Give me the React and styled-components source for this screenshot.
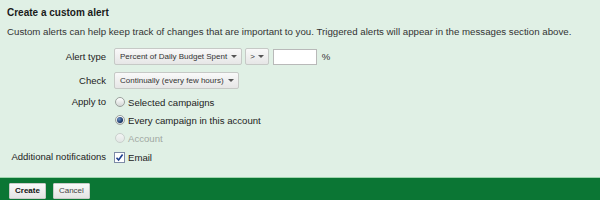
import React from "react";
import styled, { createGlobalStyle } from "styled-components";

const GlobalStyle = createGlobalStyle`
  html, body {
    margin: 0;
    padding: 0;
    background: #e0f0e5;
    font-family: "Liberation Sans", Arial, sans-serif;
  }
`;

const Page = styled.div`
  width: 600px;
  height: 200px;
  display: flex;
  flex-direction: column;
  overflow: hidden;
`;

const Panel = styled.div`
  height: 177px;
  box-sizing: border-box;
  padding: 7px 7px 0;
  color: #222;
`;

const Title = styled.h2`
  margin: 0;
  font-size: 10px;
  line-height: 12px;
  font-weight: bold;
  color: #1a1a1a;
`;

const Description = styled.p`
  margin: 7px 0 0;
  font-size: 9.7px;
  line-height: 12px;
  color: #333;
`;

const Form = styled.div`
  margin-top: 10px;
  display: flex;
  flex-direction: column;
`;

const Row = styled.div`
  display: grid;
  grid-template-columns: 99px 1fr;
  column-gap: 8px;
  align-items: start;
  margin-top: ${(p) => p.$gap || 0}px;
`;

const Label = styled.div`
  font-size: 9.5px;
  line-height: ${(p) => p.$lh || 17}px;
  text-align: right;
  color: #222;
  white-space: nowrap;
`;

const Controls = styled.div`
  display: flex;
  align-items: center;
  gap: 3px;
`;

const Options = styled.div`
  display: flex;
  flex-direction: column;
`;

const Select = styled.div`
  height: 17px;
  box-sizing: border-box;
  display: flex;
  align-items: center;
  gap: ${(p) => (p.$compact ? 3 : 4)}px;
  padding: 0 ${(p) => (p.$compact ? "4px" : "4px 0 5px")};
  border: 1px solid #c6c9c6;
  border-radius: 2px;
  background: linear-gradient(#f9f9f9, #e6e6e6);
  font-size: 8px;
  color: #333;
  white-space: nowrap;
`;

const Caret = styled.span`
  width: 0;
  height: 0;
  border-left: 3px solid transparent;
  border-right: 3px solid transparent;
  border-top: 3px solid #555;
`;

const Input = styled.div`
  width: 44px;
  height: 16px;
  box-sizing: border-box;
  border: 1px solid #b9b9b9;
  background: #fff;
  margin-left: 1px;
`;

const Unit = styled.span`
  font-size: 9.6px;
  color: #333;
  margin-left: 2px;
`;

const Option = styled.label`
  display: flex;
  align-items: center;
  gap: 3px;
  height: 18px;
  font-size: 9.6px;
  color: ${(p) => (p.$disabled ? "#a0a8a3" : "#222")};
`;

const Radio = styled.span`
  width: 10px;
  height: 10px;
  box-sizing: border-box;
  border-radius: 50%;
  border: 1px solid ${(p) => (p.$disabled ? "#c9d0cc" : "#9aa09c")};
  background: ${(p) =>
    p.$disabled
      ? "linear-gradient(#f3f5f4, #e2e6e4)"
      : "linear-gradient(#ffffff, #d4d7d5)"};
  display: flex;
  align-items: center;
  justify-content: center;
  margin-left: 1px;

  &::after {
    content: "";
    display: ${(p) => (p.$checked ? "block" : "none")};
    width: 6px;
    height: 6px;
    border-radius: 50%;
    background: radial-gradient(circle at 35% 35%, #6c8fc4, #12305f 70%);
  }
`;

const Check = styled.span`
  width: 11px;
  height: 11px;
  box-sizing: border-box;
  border: 1px solid #7d8ba6;
  background: #fff;
  display: flex;
  align-items: center;
  justify-content: center;
`;

const Footer = styled.div`
  flex: 1;
  border-top: 1px solid #9fd6ae;
  background: #0b7634;
  display: flex;
  align-items: flex-start;
  gap: 7px;
  padding: 5px 9px 0;
`;

const Button = styled.button`
  height: 16px;
  padding: 0 5px;
  border: 1px solid #c8cbc8;
  border-radius: 1px;
  background: linear-gradient(#fafafa, #e4e4e4);
  font-family: "Liberation Sans", Arial, sans-serif;
  font-size: 8px;
  font-weight: ${(p) => (p.$primary ? "bold" : "normal")};
  color: ${(p) => (p.$primary ? "#111" : "#444")};
  line-height: 14px;
`;

export default function App() {
  return (
    <Page>
      <GlobalStyle />
      <Panel>
        <Title>Create a custom alert</Title>
        <Description>
          Custom alerts can help keep track of changes that are important to you. Triggered alerts will appear in the messages section above.
        </Description>
        <Form>
          <Row>
            <Label>Alert type</Label>
            <Controls>
              <Select>
                Percent of Daily Budget Spent <Caret />
              </Select>
              <Select $compact>
                &gt; <Caret />
              </Select>
              <Input />
              <Unit>%</Unit>
            </Controls>
          </Row>
          <Row $gap={7}>
            <Label>Check</Label>
            <Controls>
              <Select>
                Continually (every few hours) <Caret />
              </Select>
            </Controls>
          </Row>
          <Row $gap={4}>
            <Label $lh={18}>Apply to</Label>
            <Options>
              <Option>
                <Radio />
                Selected campaigns
              </Option>
              <Option>
                <Radio $checked />
                Every campaign in this account
              </Option>
              <Option $disabled>
                <Radio $disabled />
                Account
              </Option>
            </Options>
          </Row>
          <Row $gap={1}>
            <Label $lh={18}>Additional notifications</Label>
            <Option>
              <Check>
                <svg width="9" height="9" viewBox="0 0 9 9">
                  <path d="M1.5 4.8 L3.6 7 L7.6 1.5" fill="none" stroke="#1d3f8f" strokeWidth="1.6" />
                </svg>
              </Check>
              Email
            </Option>
          </Row>
        </Form>
      </Panel>
      <Footer>
        <Button $primary>Create</Button>
        <Button>Cancel</Button>
      </Footer>
    </Page>
  );
}
